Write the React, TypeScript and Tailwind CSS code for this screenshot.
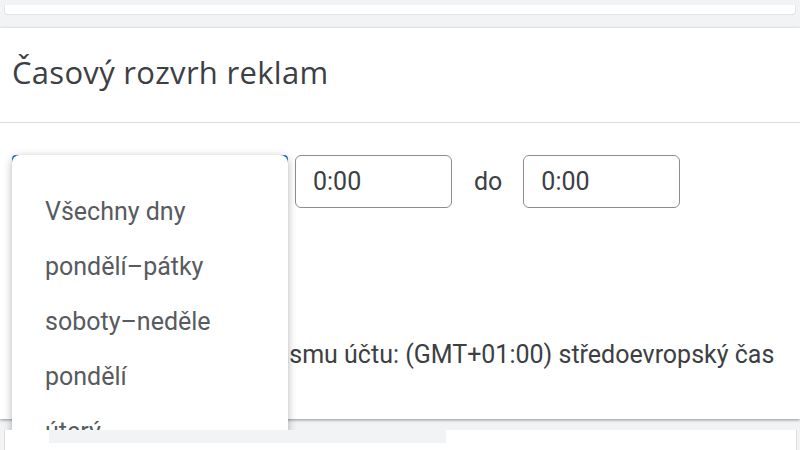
import React from "react";

const items = ["Všechny dny", "pondělí–pátky", "soboty–neděle", "pondělí", "úterý"];

export default function App() {
  return (
    <div
      className="relative w-[800px] h-[450px] overflow-hidden bg-[#f1f3f4] flex flex-col"
      style={{ fontFamily: "Roboto, 'Liberation Sans', sans-serif" }}
    >
      {/* previous card bottom */}
      <div className="h-[28px] shrink-0 pt-[5px] px-[4px]">
        <div className="h-[10px] bg-white rounded-b-[4px] border-x border-b border-[#e3e4e6]" />
      </div>

      {/* main card */}
      <div className="h-[391px] shrink-0 bg-white shadow-[0_1px_3px_rgba(0,0,0,0.4)] flex flex-col">
        <div className="h-[94px] flex items-center pl-[12px] pb-[6px]">
          <h1
            className="text-[31px] text-[#3c4043] leading-none tracking-[0.3px]"
            style={{ fontFamily: "'Open Sans', Roboto, sans-serif" }}
          >
            Časový rozvrh reklam
          </h1>
        </div>
        <div className="h-px bg-[#dadce0]" />
        <div className="flex items-center pt-[32px] pl-[12px]">
          <div className="w-[276px] h-[53px] border-2 border-[#1a73e8] rounded-[4px]" />
          <div className="ml-[7px] w-[157px] h-[53px] border-[1.5px] border-[#8a8d91] rounded-[6px] flex items-center pl-[17px] text-[25px] text-[#3c4043]">
            0:00
          </div>
          <span className="ml-[22px] text-[25px] text-[#3c4043]">do</span>
          <div className="ml-[21px] w-[157px] h-[53px] border-[1.5px] border-[#8a8d91] rounded-[6px] flex items-center pl-[17px] text-[25px] text-[#3c4043]">
            0:00
          </div>
        </div>
        <div className="mt-[128px] pl-[12px] text-[25px] text-[#3c4043] whitespace-nowrap">
          Zobrazeno v časovém pásmu účtu: (GMT+01:00) středoevropský čas
        </div>
      </div>

      {/* dropdown menu */}
      <div className="absolute left-[12px] top-[155px] w-[276px] h-[300px] bg-white rounded-[8px] shadow-[0_2px_8px_rgba(0,0,0,0.3)] pt-[29px]">
        {items.map((t) => (
          <div key={t} className="h-[55px] flex items-center pl-[33px] text-[25px] text-[#575b5f]">
            {t}
          </div>
        ))}
      </div>

      {/* next card */}
      <div className="relative z-10 mt-[11px] mr-[3px] ml-[4px] flex-1 bg-white border-x border-[#dcdde0]">
        <div className="ml-[44px] w-[397px] h-[13px] bg-[#f1f3f4]" />
      </div>
    </div>
  );
}
